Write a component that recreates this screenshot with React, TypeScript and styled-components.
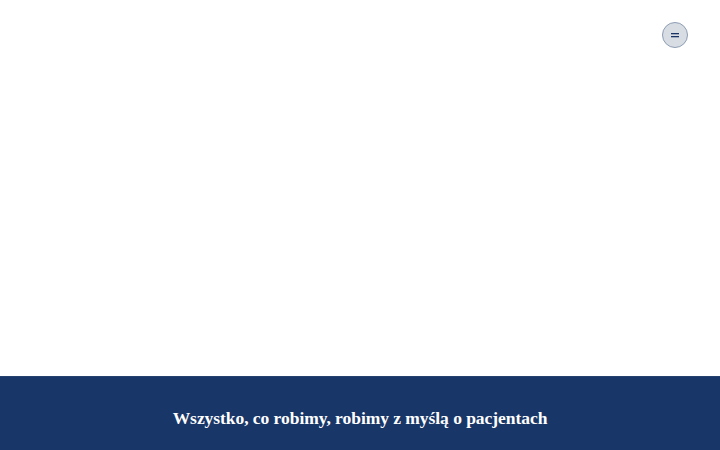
import styled, { createGlobalStyle } from "styled-components";

const GlobalStyle = createGlobalStyle`
  html, body {
    margin: 0;
    padding: 0;
    background: #ffffff;
  }
  body {
    font-family: "Liberation Serif", "DejaVu Serif", serif;
  }
`;

const Page = styled.div`
  width: 720px;
  height: 450px;
  display: flex;
  flex-direction: column;
  overflow: hidden;
`;

const Header = styled.header`
  height: 376px;
  display: flex;
  justify-content: flex-end;
  align-items: flex-start;
  padding: 22px 32px 0 0;
  box-sizing: border-box;
`;

const MenuButton = styled.button`
  width: 26px;
  height: 26px;
  border-radius: 50%;
  border: 1px solid #8d9db3;
  background: #d8dde4;
  color: #1b3466;
  display: flex;
  align-items: center;
  justify-content: center;
  padding: 0;
  cursor: pointer;
`;

const Banner = styled.section`
  flex: 1;
  background: #183668;
  border-top: 1px solid #25426f;
  display: flex;
  justify-content: center;
  padding-top: 31px;
  box-sizing: border-box;
`;

const Title = styled.h2`
  margin: 0;
  color: #ffffff;
  font-family: "Liberation Serif", "DejaVu Serif", serif;
  font-weight: 700;
  font-size: 17.5px;
  letter-spacing: -0.05px;
`;

export default function App() {
  return (
    <>
      <GlobalStyle />
      <Page>
        <Header>
          <MenuButton aria-label="menu">
            <svg width="8" height="6" viewBox="0 0 8 6">
              <rect x="0" y="1" width="8" height="1.3" fill="currentColor" />
              <rect x="0" y="4" width="8" height="1.3" fill="currentColor" />
            </svg>
          </MenuButton>
        </Header>
        <Banner>
          <Title>Wszystko, co robimy, robimy z myślą o pacjentach</Title>
        </Banner>
      </Page>
    </>
  );
}
